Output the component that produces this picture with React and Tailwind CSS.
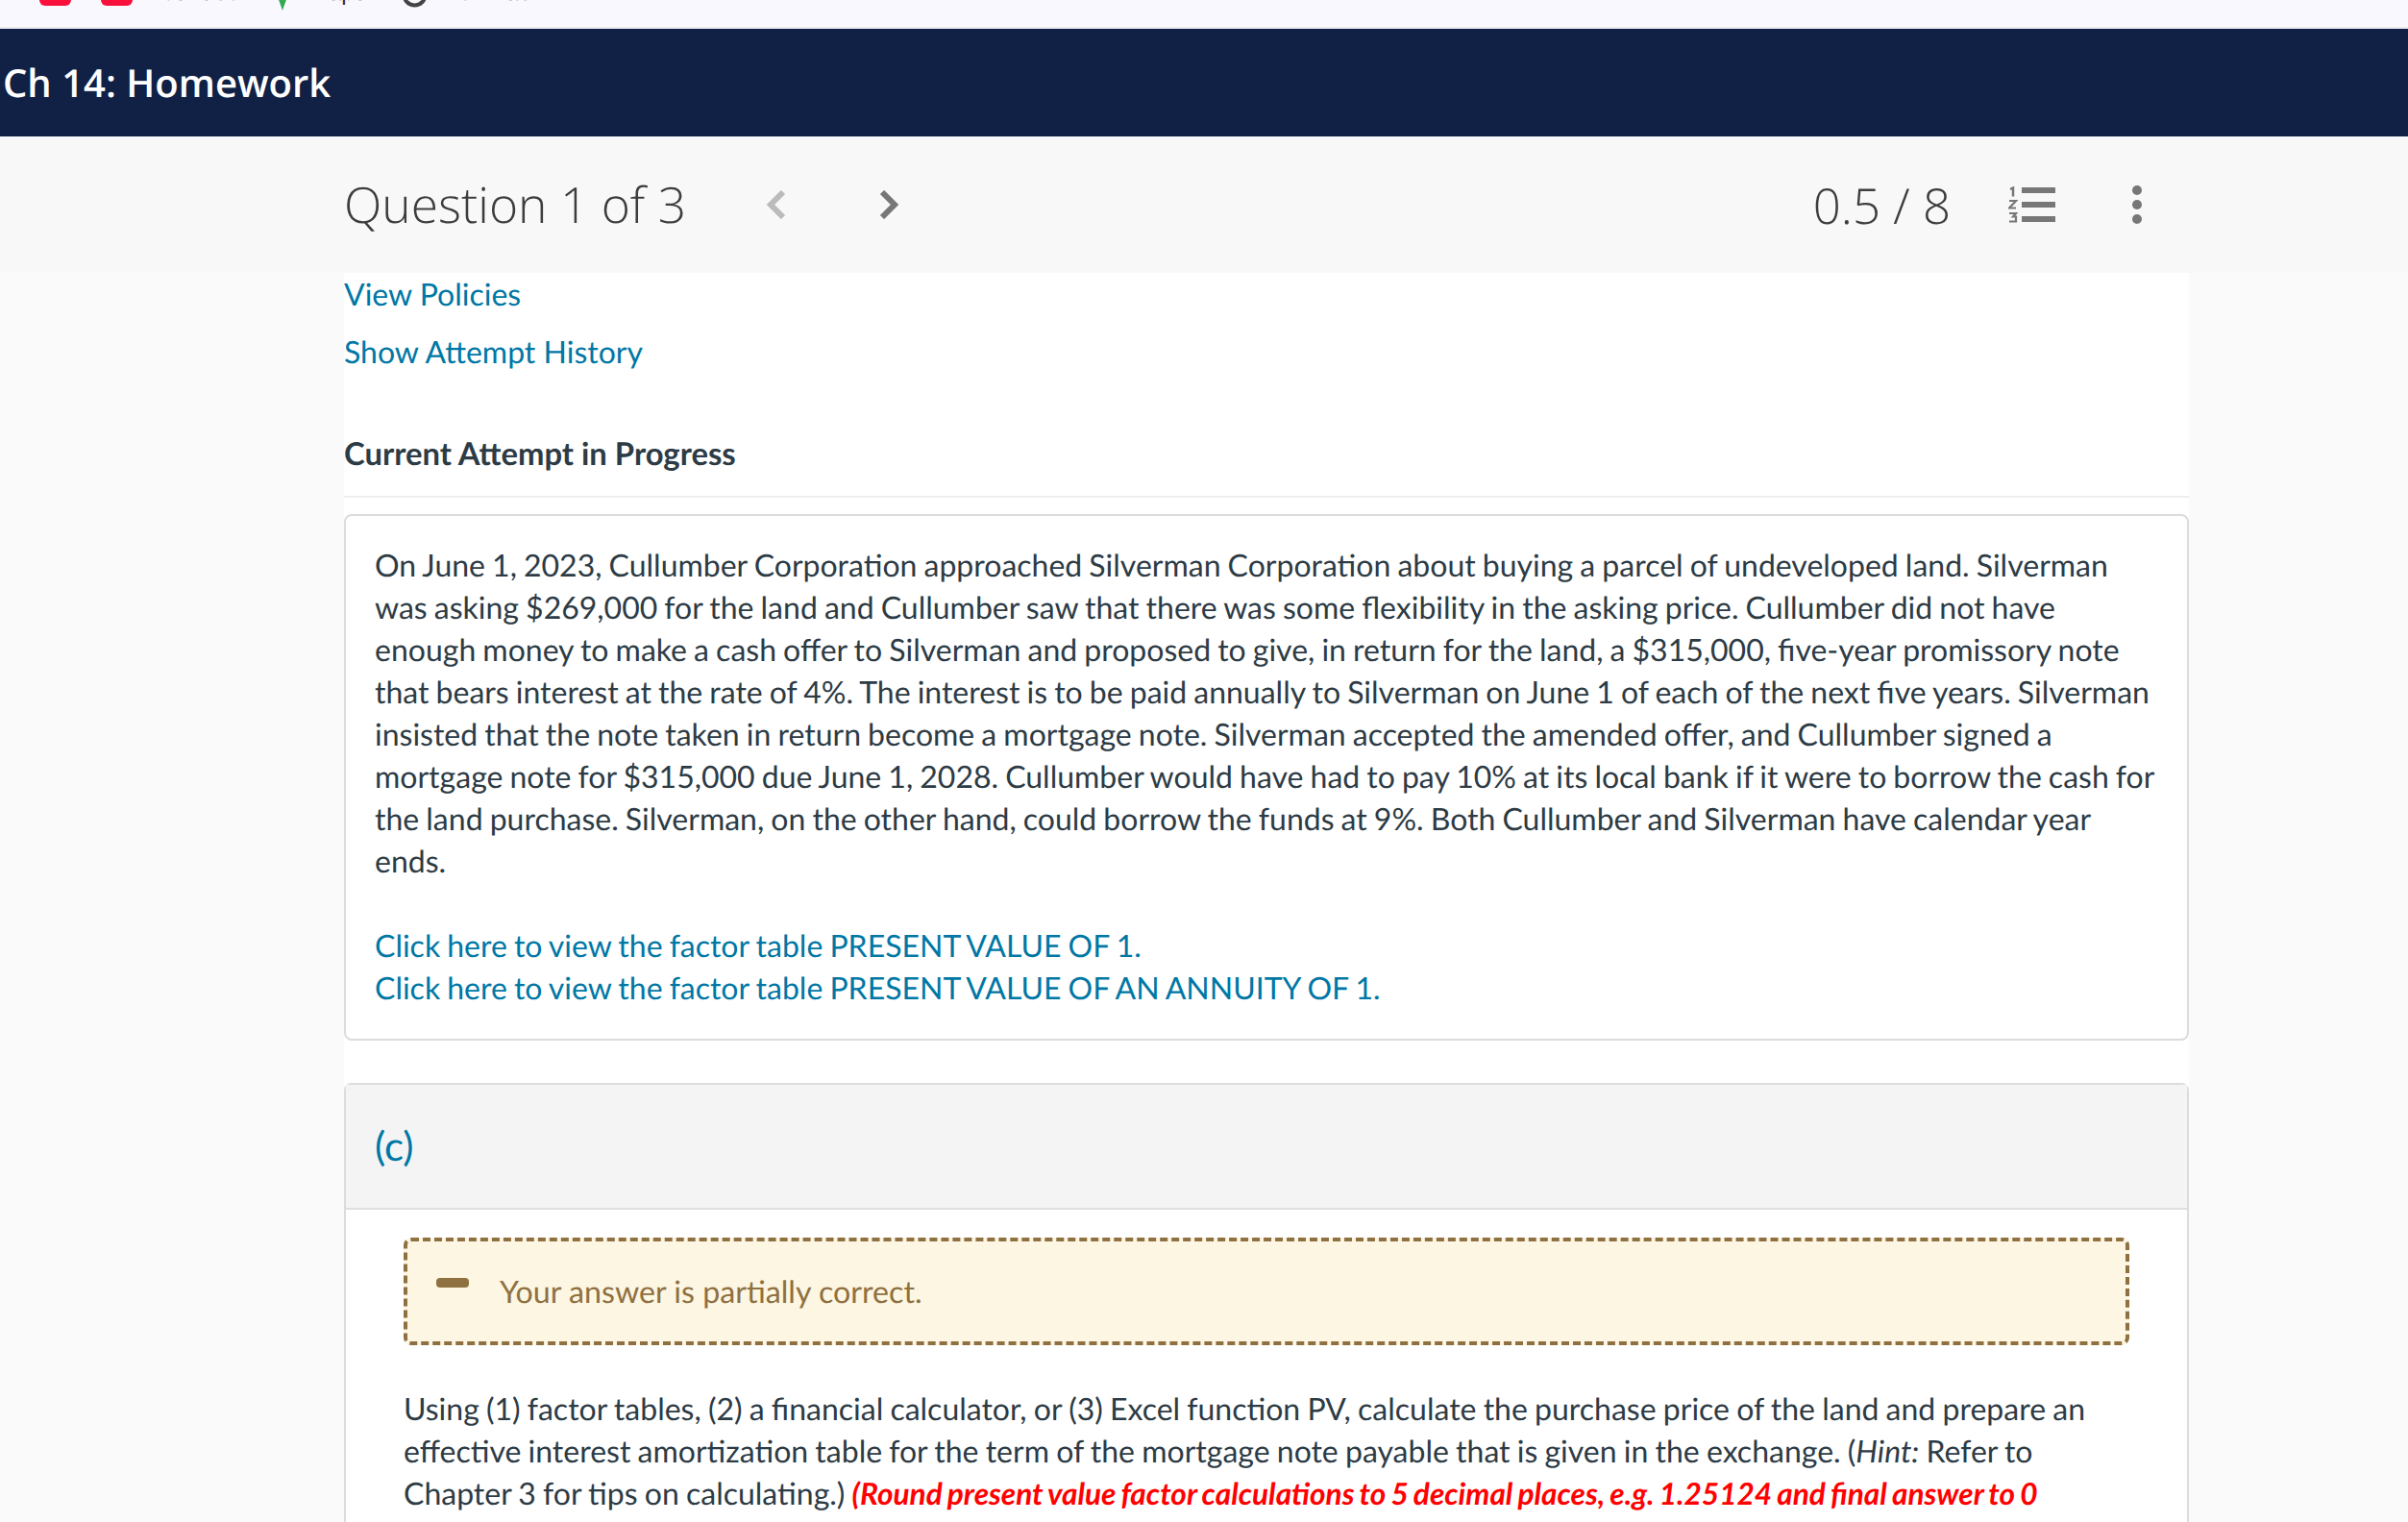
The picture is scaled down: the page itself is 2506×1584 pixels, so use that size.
const paragraph = [
  "On June 1, 2023, Cullumber Corporation approached Silverman Corporation about buying a parcel of undeveloped land. Silverman",
  "was asking $269,000 for the land and Cullumber saw that there was some flexibility in the asking price. Cullumber did not have",
  "enough money to make a cash offer to Silverman and proposed to give, in return for the land, a $315,000, five-year promissory note",
  "that bears interest at the rate of 4%. The interest is to be paid annually to Silverman on June 1 of each of the next five years. Silverman",
  "insisted that the note taken in return become a mortgage note. Silverman accepted the amended offer, and Cullumber signed a",
  "mortgage note for $315,000 due June 1, 2028. Cullumber would have had to pay 10% at its local bank if it were to borrow the cash for",
  "the land purchase. Silverman, on the other hand, could borrow the funds at 9%. Both Cullumber and Silverman have calendar year",
  "ends.",
];

function BookmarkBar() {
  return (
    <div className="h-[30px] bg-[#faf8ff] border-b-2 border-[#e8e6ee] overflow-hidden relative font-['Liberation_Sans',sans-serif] text-[24px] text-[#333]">
      <div className="flex items-end h-[6px] pl-[41px]">
        <div className="w-[33px] h-[20px] bg-[#fb0f3b] rounded-b-md shrink-0" />
        <div className="w-[33px] h-[20px] bg-[#fb0f3b] rounded-b-md shrink-0 ml-[31px]" />
        <span className="ml-[17px] leading-[28px] w-[87px] shrink-0 translate-y-[1px]">YouTube</span>
        <svg className="ml-[45px] shrink-0 translate-y-[5px]" width="14" height="20" viewBox="0 0 14 20">
          <path d="M0 0h14L7 20z" fill="#34a853" />
        </svg>
        <span className="ml-[21px] leading-[28px] w-[59px] shrink-0 translate-y-[1px]">Maps</span>
        <svg className="ml-[37px] shrink-0 translate-y-[2px]" width="27" height="27" viewBox="0 0 27 27">
          <circle cx="13.5" cy="13.5" r="11" fill="none" stroke="#444" strokeWidth="4" />
          <path d="M13 2h10v12" fill="none" stroke="#faf8ff" strokeWidth="3" />
        </svg>
        <span className="ml-[15px] leading-[28px] shrink-0 translate-y-[1px]">New Tab</span>
      </div>
    </div>
  );
}

function ListIcon() {
  return (
    <svg width="50" height="38" viewBox="0 0 50 38" fill="none" stroke="#777">
      <path d="M2 3l3-1.500v9" strokeWidth="2.500" />
      <path d="M1 15h7l-7 7.500h7" strokeWidth="2.200" />
      <path d="M1 28h7l-3 3.500h3v5H1" strokeWidth="2.200" />
      <rect x="14" y="1" width="35" height="6" fill="#777" stroke="none" />
      <rect x="14" y="16" width="35" height="6" fill="#777" stroke="none" />
      <rect x="14" y="31" width="35" height="6" fill="#777" stroke="none" />
    </svg>
  );
}

export default function App() {
  return (
    <div className="h-[1584px] overflow-hidden bg-[#fafafa] font-['Lato',sans-serif] text-[32px] leading-[44px] text-[#2d3b45] [text-rendering:geometricPrecision]">
      <BookmarkBar />

      <div className="h-[112px] bg-[#112145] flex items-center pl-[3px] pb-[1px]">
        <h1 className="font-['Open_Sans',sans-serif] font-semibold text-[40px] leading-[48px] text-white">Ch 14: Homework</h1>
      </div>

      <div className="h-[142px] bg-[#f8f8f8] flex items-center pl-[358px] pr-[228px] font-['Open_Sans',sans-serif] text-[#3d3d3d]">
        <span className="font-light text-[51.5px] leading-[60px] w-[439px]">Question 1 of 3</span>
        <svg width="21" height="30" viewBox="0 0 21 30" fill="none" stroke="#bbb" strokeWidth="6">
          <path d="M18 2L5 15l13 13" />
        </svg>
        <svg className="ml-[97px]" width="21" height="30" viewBox="0 0 21 30" fill="none" stroke="#777" strokeWidth="6">
          <path d="M3 2l13 13L3 28" />
        </svg>
        <span className="ml-auto font-light text-[51px] leading-[60px]">0.5 / 8</span>
        <div className="ml-[60px]"><ListIcon /></div>
        <div className="ml-[79px] mr-[49px] flex flex-col gap-[5px]">
          <div className="w-[10px] h-[10px] rounded-full bg-[#777]" />
          <div className="w-[10px] h-[10px] rounded-full bg-[#777]" />
          <div className="w-[10px] h-[10px] rounded-full bg-[#777]" />
        </div>
      </div>

      <div className="ml-[358px] w-[1920px] bg-white">
        <a className="block text-[#0077a5]">View Policies</a>
        <a className="block mt-[16px] text-[#0077a5]">Show Attempt History</a>

        <div className="mt-[62px] pb-[22px] border-b-2 border-[#eeeeee] font-bold text-[32.8px]">Current Attempt in Progress</div>

        <div className="mt-[17px] border-2 border-[#dcdcdc] rounded-lg pt-[29px] pb-[31px] px-[30px] [word-spacing:-1.1px]">
          {paragraph.map((line) => (
            <div key={line} className="whitespace-nowrap">{line}</div>
          ))}
          <div className="mt-[44px] text-[#0077a5]">
            <a className="block">Click here to view the factor table PRESENT VALUE OF 1.</a>
            <a className="block">Click here to view the factor table PRESENT VALUE OF AN ANNUITY OF 1.</a>
          </div>
        </div>

        <div className="mt-[44px] border-2 border-b-0 border-[#dcdcdc] rounded-t-lg">
          <div className="h-[130px] bg-[#f4f4f4] border-b-2 border-[#dedede] flex items-center px-[30px] pb-[2px]">
            <span className="text-[42px] text-[#0077a5]">(c)</span>
          </div>

          <div className="pt-[29px] pb-[60px] px-[60px]">
            <div className="h-[112px] bg-[#fdf6e3] border-4 border-dashed border-[#8f7040] rounded-lg flex items-center pl-[30px] text-[#8f7040]">
              <div className="w-[34px] h-[10px] rounded-sm bg-[#8f7040] -mt-[18px]" />
              <span className="ml-[32px] text-[32.2px]">Your answer is partially correct.</span>
            </div>

            <div className="mt-[44px] [word-spacing:-1px]">
              <div className="whitespace-nowrap">Using (1) factor tables, (2) a financial calculator, or (3) Excel function PV, calculate the purchase price of the land and prepare an</div>
              <div className="whitespace-nowrap">effective interest amortization table for the term of the mortgage note payable that is given in the exchange. (<i>Hint:</i> Refer to</div>
              <div className="whitespace-nowrap">
                Chapter 3 for tips on calculating.) <b className="italic text-[#ff0000] text-[31.6px] [word-spacing:-1.8px]">(Round present value factor calculations to 5 decimal places, e.g. 1.25124 and final answer to 0</b>
              </div>
            </div>
          </div>
        </div>
      </div>
    </div>
  );
}
